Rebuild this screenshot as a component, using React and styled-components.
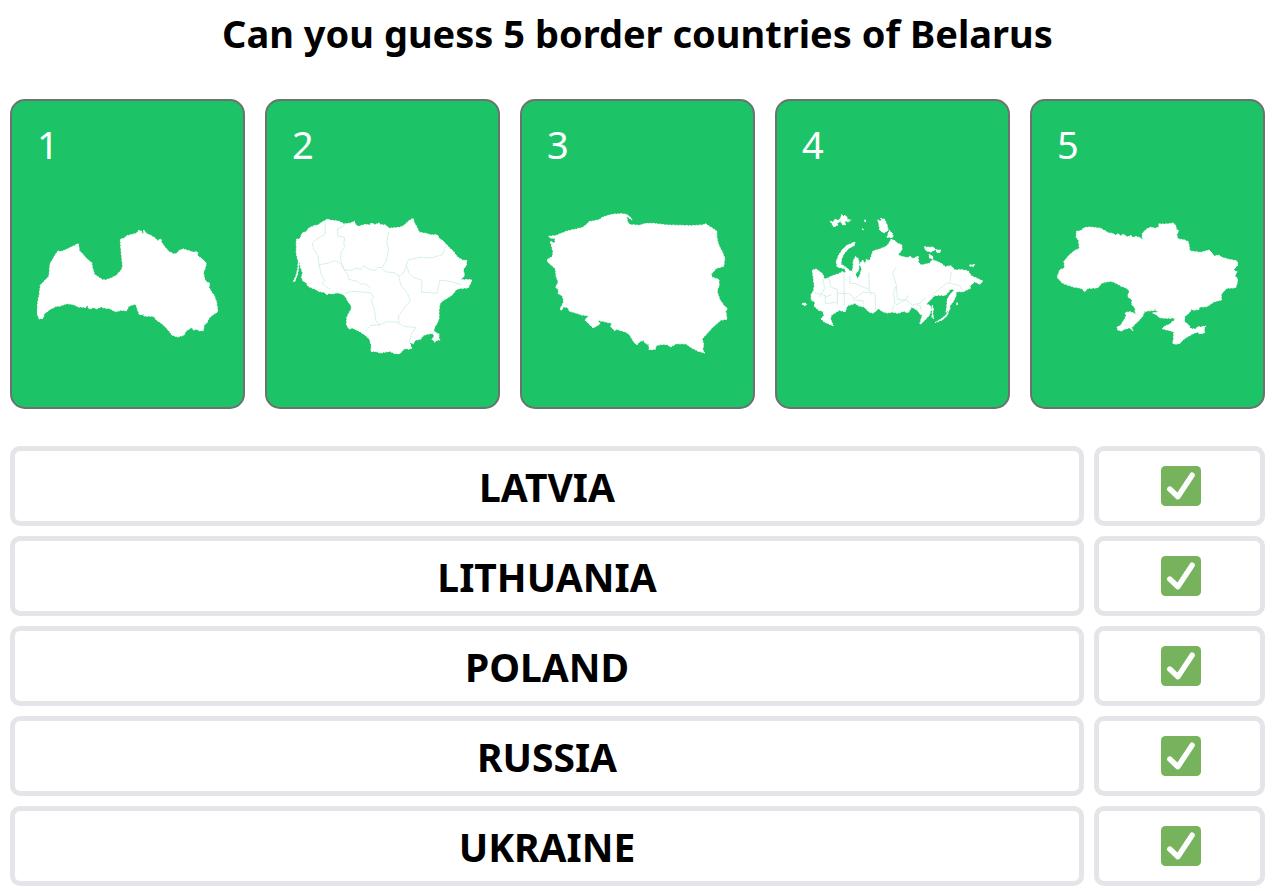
import styled, {createGlobalStyle} from 'styled-components';

const countries = [
  {
    name: 'Latvia',
    viewBox: '81 0 543 480',
    land: [
      'M81 298L84 272 88 254 91 226 95 221 103 213 117 199 119 176 120 162 130 145 141 126 146 123 150 125 164 121 205 101 208 122 216 130 231 147 245 158 248 176 254 194 264 200 277 209 288 210 304 204 318 197 333 181 338 170 335 140 333 120 331 88 344 84 350 77 364 74 381 69 386 61 394 63 396 72 400 70 401 60 411 72 422 76 436 85 443 92 453 87 455 98 468 115 476 124 491 132 501 130 508 121 520 117 532 121 548 126 563 126 563 138 576 146 589 160 584 180 580 186 584 208 591 217 599 220 597 233 606 248 613 257 620 278 623 305 611 313 598 323 590 339 582 346 580 362 566 362 562 358 551 360 545 353 530 361 521 376 502 381 486 375 472 357 458 343 438 329 431 319 402 318 400 313 388 314 377 282 364 286 356 289 350 302 333 301 316 305 300 296 279 293 273 290 259 297 252 292 240 297 235 294 233 285 227 292 206 291 188 283 169 281 151 288 139 289 122 297 103 311 99 325 88 327 81 311Z',
    ],
  },
  {
    name: 'Lithuania',
    viewBox: '81 0 543 480',
    land: [
      'M94 88L105 86 111 70 123 65 132 54 145 48 159 45 173 35 187 28 199 31 219 33 239 42 258 39 268 34 273 46 281 49 302 43 314 46 318 39 330 44 341 39 347 44 361 45 373 55 390 53 404 52 416 47 430 34 444 25 448 38 455 50 463 67 481 70 500 75 516 74 523 85 535 94 552 112 566 125 576 140 593 151 605 151 604 166 595 178 598 198 587 209 620 209 617 220 609 234 587 235 573 239 565 251 554 260 533 272 525 281 522 298 522 326 515 342 509 351 506 363 501 370 477 375 466 388 450 391 445 402 434 397 440 415 430 418 420 415 404 431 390 431 374 424 357 427 345 429 331 424 318 425 319 407 314 389 304 378 285 365 262 354 252 357 245 345 245 325 250 312 259 297 258 286 249 275 244 264 234 253 216 248 203 252 193 250 185 254 178 247 164 245 149 237 129 229 124 218 115 214 109 202 113 190 106 169 102 154 101 175 97 195 89 215 85 214 92 200 98 178 100 155 94 131Z',
      'M502 367L509 364 514 369 523 373 521 382 525 390 514 391 510 397 501 388 507 379Z',
    ],
    borders: [
      'M180 36L181 72 165 82 151 90 142 100 145 116 154 128 160 145 162 164 190 160 208 152 221 156 232 170 240 182 251 199 251 208 278 214 286 222 303 222 317 234',
      'M239 42L232 51 218 55 218 78 240 82 236 100 240 110 228 126 227 150 238 180 261 181 273 174 287 178 297 168 308 176 329 182 340 172 351 173 364 154 371 120 365 98 371 65',
      'M162 164L170 197 178 211 172 222 197 238 M241 250L260 244 316 248 325 260 319 274 329 300 332 332 345 345 318 346 303 362',
      'M352 178L364 186 388 188 403 198 416 188 430 150 466 142 498 144 532 134 543 105',
      'M425 170L433 190 448 203 470 210 471 222 469 246 516 250 524 211 550 213 590 224 M401 200L408 226 427 250 436 272 418 294 401 318 401 337 366 335 343 345 M401 340L420 350 453 352 440 370 434 395',
    ],
  },
  {
    name: 'Poland',
    viewBox: '81 30 543 480',
    land: [
      'M86 109L106 107 142 93 186 83 197 76 207 65 235 60 251 50 278 43 304 41 319 43 333 53 336 60 319 49 324 69 332 74 360 76 373 71 397 70 440 75 512 77 548 75 556 71 590 93 591 116 597 137 608 158 614 175 611 199 589 205 574 222 575 231 597 239 597 258 591 273 599 298 611 316 622 326 617 334 621 357 602 361 578 382 559 403 546 417 551 433 548 448 554 459 533 453 509 440 499 432 469 431 451 441 443 434 425 433 408 437 406 448 387 449 387 434 376 430 371 421 359 425 350 435 340 424 330 406 319 397 290 388 284 392 272 380 276 370 248 364 233 361 240 372 219 384 207 371 195 360 206 347 186 345 165 338 149 334 143 323 130 320 126 331 120 327 131 306 128 288 115 281 115 268 107 262 115 246 109 232 106 206 81 184 83 178 98 169 99 154 91 124 105 130 105 114 92 115Z',
      'M361 80L374 77 387 71 372 82Z',
    ],
  },
  {
    name: 'Russia',
    viewBox: '21 15 543 480',
    land: [
      'M52 196L63 192 79 203 85 211 88 223 98 219 105 216 116 211 130 207 141 200 151 204 151 192 126 185 124 168 132 149 143 133 156 121 180 111 178 121 160 131 146 148 139 164 138 178 153 187 165 198 173 199 175 168 181 155 190 161 193 179 190 198 181 207 187 221 194 212 200 192 194 177 203 165 211 178 214 163 224 167 229 153 234 138 252 133 270 126 280 118 288 103 300 107 307 115 320 119 321 134 309 149 318 154 338 158 346 154 354 161 369 153 371 174 380 180 404 175 412 164 437 174 451 185 468 182 479 195 500 194 520 198 528 212 544 219 563 228 555 238 539 230 526 242 526 250 504 260 482 260 484 269 476 288 465 302 464 315 453 322 456 300 456 286 464 270 480 253 467 253 452 271 420 271 394 297 406 302 410 313 402 332 380 355 374 357 382 331 374 326 367 316 350 306 340 323 326 319 308 325 293 321 278 324 263 320 251 311 234 325 219 319 209 307 190 302 180 295 156 303 151 320 132 316 119 325 108 331 107 344 115 362 102 357 87 350 78 342 87 331 84 319 71 316 58 304 60 292 49 285 48 270 56 256 58 243 56 227 54 210Z',
      'M21 297L28 293 35 298 29 302Z',
      'M106 49L117 50 119 43 131 46 138 37 139 29 146 34 150 30 155 36 158 44 167 44 161 51 149 47 152 60 143 59 136 49 127 54 128 61 116 65Z',
      'M209 44L214 48 210 51Z M203 71L206 74 202 75Z M248 45L260 49 257 40 269 43 276 60 280 75 267 84 254 75 252 58Z',
      'M276 97L283 76 293 86 294 97Z M388 125L403 127 415 126 421 134 408 141 393 137Z M422 134L438 136 433 144 426 142Z M402 148L412 153 414 161 404 160Z',
      'M524 180L539 179 536 184 526 184Z M412 300L415 313 413 326 416 342 411 337Z M420 353L437 343 452 331 461 318 457 331 443 344Z M486 293L489 299 485 299Z',
    ],
    borders: [
      'M84 222L89 251 73 276 M102 222L108 247 127 253 127 300 M147 206L148 300 M127 264L165 267 178 282 204 261 240 265 242 316 M164 214L164 235 181 236 224 254 229 268 M60 263L90 272 91 296 124 292 M90 276L111 269 M175 285L204 287 204 305 M222 204L223 253',
      'M303 187L293 202 304 241 295 268 300 292 292 317 M304 243L307 283 335 286 353 300 376 294 394 277 M304 300L334 283 340 270 M410 272L430 255 455 234 464 236 469 201 M468 235L494 242 502 256 M366 300L376 303 379 315',
    ],
  },
  {
    name: 'Ukraine',
    viewBox: '81 0 543 480',
    land: [
      'M139 64L154 62 160 54 178 51 212 55 235 68 250 71 257 76 265 71 272 78 280 73 293 81 303 76 309 83 318 79 331 84 337 89 337 70 350 57 362 52 376 55 387 52 386 42 413 42 430 39 438 48 438 57 446 62 440 74 444 87 461 89 475 95 480 123 509 127 518 126 537 120 547 130 552 139 565 135 576 142 592 147 611 151 620 152 624 165 612 177 612 181 621 185 615 197 624 210 617 233 590 235 574 252 574 270 553 275 530 290 509 291 507 298 489 301 485 296 480 306 463 321 464 335 479 348 480 356 498 357 503 350 514 351 527 348 522 357 524 369 508 371 502 366 489 371 473 380 461 388 450 400 435 403 428 399 431 385 431 365 412 360 396 356 407 347 421 342 428 333 434 333 433 324 411 325 389 323 379 314 368 309 388 305 377 302 377 289 374 301 344 304 337 320 329 329 316 342 305 353 309 362 299 354 282 358 276 363 263 360 261 352 273 345 283 328 289 317 285 308 301 305 316 312 327 318 316 310 315 295 305 282 306 269 293 260 298 244 291 235 273 228 251 216 238 214 215 219 207 230 199 234 174 235 164 245 154 235 131 231 98 220 81 202 90 179 104 174 102 154 118 135 135 121 148 116 146 91 139 83Z',
    ],
  },
];

export default function App() {
  return (
    <>
      <GlobalStyle />
      <Page>
        <Title>Can you guess 5 border countries of Belarus</Title>
        <Cards>
          {countries.map((country, index) => (
            <Card key={country.name}>
              <CardNumber>{index + 1}</CardNumber>
              <CountryMap country={country} />
            </Card>
          ))}
        </Cards>
        <Guesses>
          {countries.map(({name}) => (
            <Guess key={name}>
              <Name>{name}</Name>
              <Result>
                <CheckMark />
              </Result>
            </Guess>
          ))}
        </Guesses>
      </Page>
    </>
  );
}

function CountryMap({country}) {
  return (
    <Map viewBox={country.viewBox} role="img" aria-label={`Map of ${country.name}`}>
      {country.land.map(path => (
        <path key={path} d={path} fill="white" stroke="white" strokeWidth="3" strokeDasharray="5 4 8 3" />
      ))}
      {country.borders?.map(path => (
        <path key={path} d={path} fill="none" stroke="#a9e3c3" strokeWidth="2" strokeDasharray="5 2" />
      ))}
    </Map>
  );
}

function CheckMark() {
  return (
    <CheckIcon viewBox="0 0 36 36" role="img" aria-label="Correct">
      <rect width="36" height="36" rx="4" fill="#77b25d" />
      <path
        d="M7.9 20.8L15.2 27.6 28 8.3"
        fill="none"
        stroke="white"
        strokeWidth="4.9"
        strokeLinecap="round"
        strokeLinejoin="round"
      />
    </CheckIcon>
  );
}

const GlobalStyle = createGlobalStyle`
  * {
    box-sizing: border-box;
  }

  body {
    margin: 0;
    background-color: white;
    color: black;
    font-family: 'Segoe UI', 'Noto Sans', 'Open Sans', sans-serif;
  }
`;

const Page = styled.main`
  padding: 6px 10px 5px;
`;

const Title = styled.h1`
  margin: 0 0 39px;
  font-size: 38px;
  line-height: 54px;
  font-weight: 700;
  text-align: center;
`;

const Cards = styled.section`
  display: grid;
  grid-template-columns: repeat(5, minmax(0, 1fr));
  gap: 20px;
  margin-bottom: 37px;
`;

const Card = styled.article`
  min-height: 310px;
  padding: 17px 25px;
  border: 2px solid #6b7270;
  border-radius: 15px;
  background-color: #1dc467;
`;

const CardNumber = styled.div`
  margin-bottom: 40px;
  color: white;
  font-size: 38px;
  line-height: 52px;
`;

const Map = styled.svg`
  display: block;
  width: 100%;
`;

const Guesses = styled.section`
  display: grid;
  gap: 10px;
`;

const Guess = styled.div`
  display: grid;
  grid-template-columns: minmax(0, 1fr) 171px;
  gap: 10px;
`;

const Box = styled.div`
  height: 80px;
  display: flex;
  justify-content: center;
  align-items: center;
  border: 5px solid #e5e5e9;
  border-radius: 10px;
`;

const Name = styled(Box)`
  padding-top: 2px;
  font-size: 39px;
  line-height: 56px;
  font-weight: 700;
  text-transform: uppercase;
`;

const Result = styled(Box)`
  padding-left: 2px;
`;

const CheckIcon = styled.svg`
  width: 40px;
  height: 40px;
`;
